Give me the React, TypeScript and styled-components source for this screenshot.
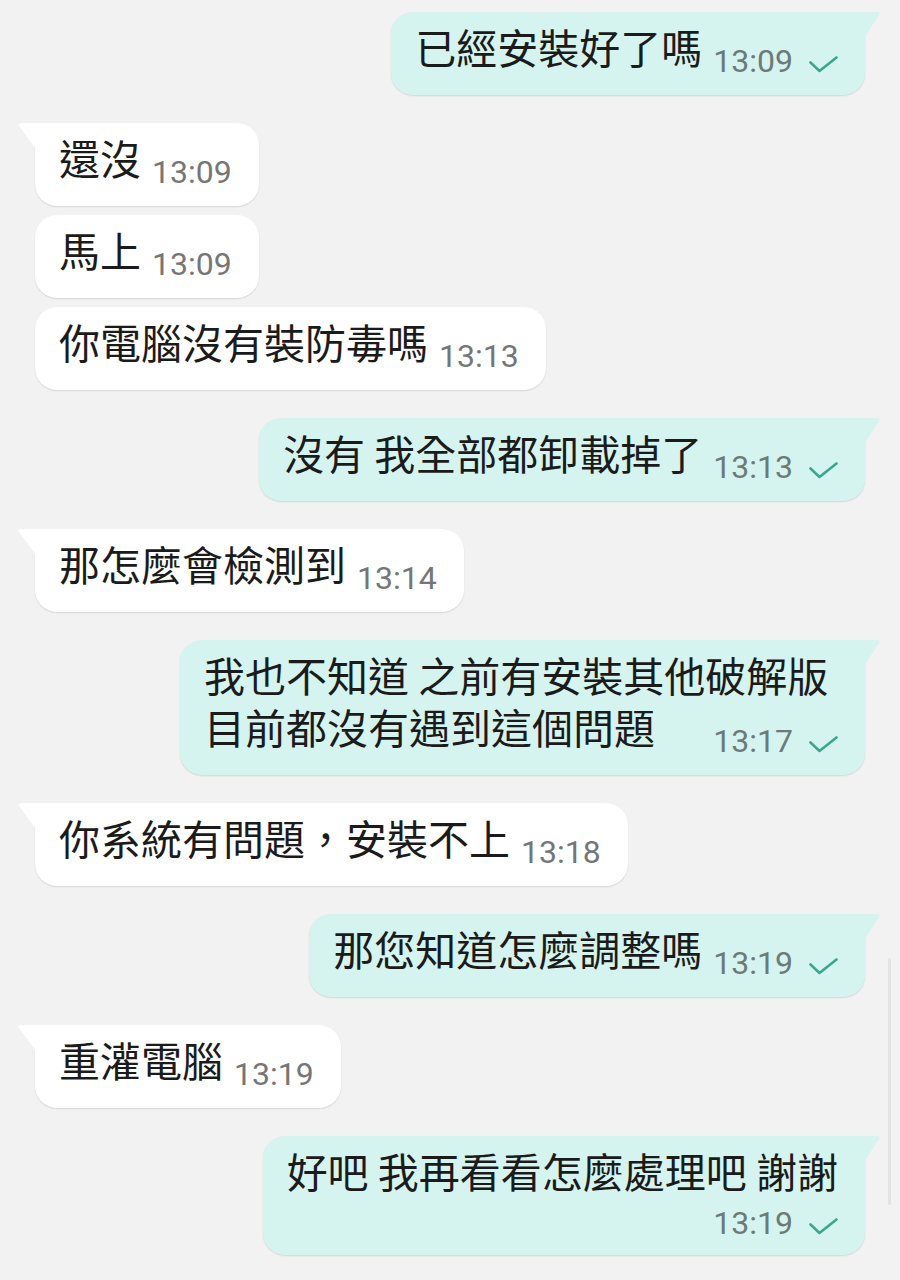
import styled, { createGlobalStyle, css } from 'styled-components';

const GlobalStyle = createGlobalStyle`
  html, body {
    margin: 0;
    padding: 0;
    background: #f2f2f2;
  }
  body {
    font-family: "Noto Sans CJK TC", "Noto Sans", sans-serif;
    -webkit-font-smoothing: antialiased;
  }
`;

const Screen = styled.div`
  min-height: 1280px;
  padding: 12px 35px 20px;
  box-sizing: border-box;
  display: flex;
  flex-direction: column;
`;

const Row = styled.div<{ $out: boolean; $first: boolean }>`
  display: flex;
  justify-content: ${({ $out }) => ($out ? 'flex-end' : 'flex-start')};
  margin-top: ${({ $first }) => ($first ? '28px' : '9px')};

  &:first-child {
    margin-top: 0;
  }
`;

const Bubble = styled.div<{ $out: boolean; $tail: boolean }>`
  position: relative;
  box-sizing: border-box;
  max-width: 685px;
  padding: 8px 27px 23px 24px;
  border-radius: 22px;
  background: ${({ $out }) => ($out ? '#d5f4ef' : '#ffffff')};
  box-shadow: 0 1px 1.5px rgba(0, 0, 0, 0.12);
  color: #1b1b1b;
  font-size: 41px;
  line-height: 52px;

  ${({ $tail, $out }) =>
    $tail &&
    ($out
      ? css`
          border-top-right-radius: 0;
          &::before {
            content: '';
            position: absolute;
            top: 0;
            right: -15px;
            width: 16px;
            height: 26px;
            background: #d5f4ef;
            clip-path: polygon(0 0, 85% 0, 100% 6%, 0 100%);
          }
        `
      : css`
          border-top-left-radius: 0;
          &::before {
            content: '';
            position: absolute;
            top: 0;
            left: -17px;
            width: 18px;
            height: 26px;
            background: #ffffff;
            clip-path: polygon(15% 0, 100% 0, 100% 100%, 0 6%);
          }
        `)}
`;

const Text = styled.span`
  white-space: pre-wrap;
`;

const Meta = styled.span<{ $below: boolean }>`
  display: flex;
  align-items: center;
  justify-content: flex-end;
  gap: 16px;
  font-family: Roboto, "Liberation Sans", sans-serif;
  font-size: 32px;

  ${({ $below }) =>
    $below
      ? css`
          line-height: 36px;
          margin-top: 9px;
          margin-bottom: -9px;
        `
      : css`
          float: right;
          line-height: 52px;
          height: 52px;
          margin-left: 11px;
          margin-top: 15px;
          margin-bottom: -15px;
        `}
`;

const Time = styled.span<{ $out: boolean }>`
  color: ${({ $out }) => ($out ? '#6c7a78' : '#767676')};
`;

const Tick = styled.svg`
  display: block;
  margin-top: 6px;
`;

const Scrollbar = styled.div`
  position: fixed;
  top: 958px;
  right: 9px;
  width: 3px;
  height: 247px;
  border-radius: 2px;
  background: #e3e3e3;
`;

type Msg = { text: string; time: string; out: boolean; below?: boolean };

const messages: Msg[] = [
  { text: '已經安裝好了嗎', time: '13:09', out: true },
  { text: '還沒', time: '13:09', out: false },
  { text: '馬上', time: '13:09', out: false },
  { text: '你電腦沒有裝防毒嗎', time: '13:13', out: false },
  { text: '沒有 我全部都卸載掉了', time: '13:13', out: true },
  { text: '那怎麼會檢測到', time: '13:14', out: false },
  { text: '我也不知道 之前有安裝其他破解版目前都沒有遇到這個問題', time: '13:17', out: true },
  { text: '你系統有問題，安裝不上', time: '13:18', out: false },
  { text: '那您知道怎麼調整嗎', time: '13:19', out: true },
  { text: '重灌電腦', time: '13:19', out: false },
  { text: '好吧 我再看看怎麼處理吧 謝謝', time: '13:19', out: true, below: true },
];

function Check() {
  return (
    <Tick width="29" height="17" viewBox="0 0 29 17" fill="none">
      <polyline
        points="1.5,6.5 10.5,15 27.5,1.5"
        stroke="#3aa88e"
        strokeWidth="2.6"
        strokeLinecap="round"
        strokeLinejoin="round"
      />
    </Tick>
  );
}

export default function App() {
  return (
    <>
      <GlobalStyle />
      <Screen>
        {messages.map((m, i) => {
          const first = i === 0 || messages[i - 1].out !== m.out;
          return (
            <Row key={i} $out={m.out} $first={first}>
              <Bubble $out={m.out} $tail={first}>
                <Text>{m.text}</Text>
                <Meta $below={!!m.below}>
                  <Time $out={m.out}>{m.time}</Time>
                  {m.out && <Check />}
                </Meta>
              </Bubble>
            </Row>
          );
        })}
      </Screen>
      <Scrollbar />
    </>
  );
}
